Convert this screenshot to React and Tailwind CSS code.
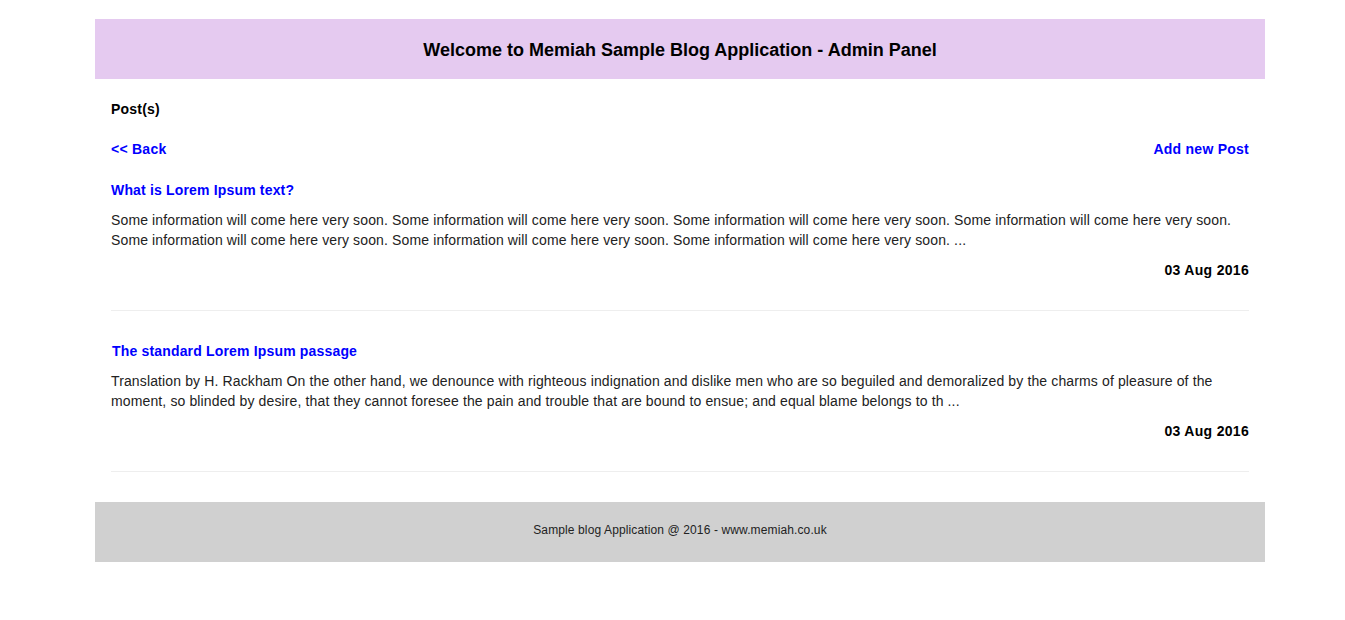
const POSTS = [
  {
    title: "What is Lorem Ipsum text?",
    body: "Some information will come here very soon. Some information will come here very soon. Some information will come here very soon. Some information will come here very soon. Some information will come here very soon. Some information will come here very soon. Some information will come here very soon. ...",
    date: "03 Aug 2016",
    indent: "",
  },
  {
    title: "The standard Lorem Ipsum passage",
    body: "Translation by H. Rackham On the other hand, we denounce with righteous indignation and dislike men who are so beguiled and demoralized by the charms of pleasure of the moment, so blinded by desire, that they cannot foresee the pain and trouble that are bound to ensue; and equal blame belongs to th ...",
    date: "03 Aug 2016",
    indent: "pl-px",
  },
];

export default function App() {
  return (
    <div className="min-h-screen bg-white font-['Liberation_Sans',Arial,sans-serif] text-[#222]">
      <div className="pl-[95px] pt-[19px]">
        <div className="w-[1170px]">
          <header className="h-[60px] pt-[2px] bg-[#e5caf0] flex items-center justify-center">
            <h1 className="text-[18px] font-bold text-black">Welcome to Memiah Sample Blog Application - Admin Panel</h1>
          </header>

          <main className="px-4 pt-5">
            <h2 className="text-[14px] leading-5 font-bold tracking-[0.2px] text-black">Post(s)</h2>
            <div className="mt-5 flex items-center justify-between text-[14px] leading-5 font-bold tracking-[0.25px] text-[#0000ff]">
              <a href="#">&lt;&lt; Back</a>
              <a href="#">Add new Post</a>
            </div>

            <div className="mt-[21px]">
              {POSTS.map((p, i) => (
                <article key={i} className={i > 0 ? "pt-[30px]" : ""}>
                  <h3 className={`${p.indent} text-[14px] leading-5 font-bold tracking-[0.17px] text-[#0000ff]`}>{p.title}</h3>
                  <p className="mt-[10px] text-[14px] leading-5 tracking-[0.13px] text-[#222]">{p.body}</p>
                  <p className="mt-[10px] text-right text-[14px] leading-5 font-bold tracking-[0.3px] text-black">{p.date}</p>
                  <div className="mt-[30px] border-t border-[#eeeeee]" />
                </article>
              ))}
            </div>
          </main>

          <footer className="mt-[30px] h-[60px] pb-[4px] bg-[#d0d0d0] flex items-center justify-center">
            <p className="text-[12px] tracking-[0.12px] text-[#222]">Sample blog Application @ 2016 - www.memiah.co.uk</p>
          </footer>
        </div>
      </div>
    </div>
  );
}
